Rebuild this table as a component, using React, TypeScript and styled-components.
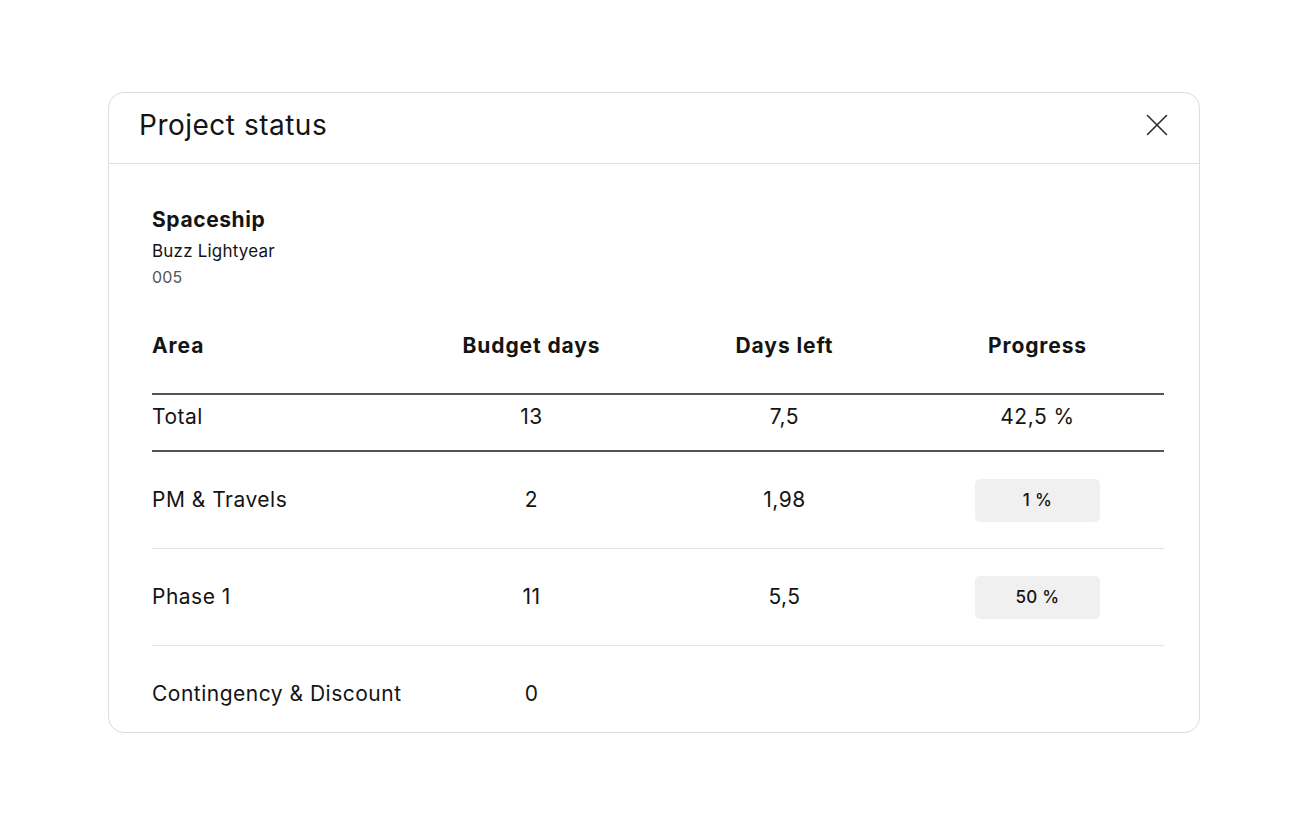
import React from "react";
import styled, { createGlobalStyle } from "styled-components";

const GlobalStyle = createGlobalStyle`
  html, body {
    margin: 0;
    padding: 0;
    background: #ffffff;
  }
  body {
    font-family: Inter, "Noto Sans", "Liberation Sans", sans-serif;
    color: #141414;
  }
  * { box-sizing: border-box; }
`;

const Page = styled.div`
  width: 1305px;
  height: 833px;
  padding: 92px 0 0 108px;
`;

const Card = styled.section`
  width: 1092px;
  height: 641px;
  border: 1px solid #dcdcdc;
  border-radius: 16px;
  overflow: hidden;
  background: #fff;
  display: flex;
  flex-direction: column;
`;

const Header = styled.header`
  height: 71px;
  flex: none;
  display: flex;
  align-items: center;
  justify-content: space-between;
  padding: 0 31px 6px 30px;
  border-bottom: 1px solid #dedede;
`;

const Title = styled.h1`
  margin: 0;
  font-size: 28px;
  font-weight: 400;
  line-height: 36px;
  color: #141414;
  letter-spacing: 0.5px;
`;

const CloseButton = styled.button`
  width: 22px;
  height: 22px;
  padding: 0;
  border: 0;
  background: transparent;
  display: flex;
  align-items: center;
  justify-content: center;
  cursor: pointer;
`;

const Body = styled.div`
  flex: 1;
  padding: 42px 35px 0 43px;
`;

const Info = styled.div`
  display: flex;
  flex-direction: column;
`;

const ProjectName = styled.div`
  font-size: 21px;
  font-weight: 700;
  line-height: 28px;
  letter-spacing: 0.6px;
  margin-bottom: 4px;
`;

const InfoLine = styled.div<{ $muted?: boolean }>`
  font-size: ${(p) => (p.$muted ? "16px" : "17px")};
  line-height: 26px;
  letter-spacing: 0.2px;
  color: ${(p) => (p.$muted ? "#555" : "#141414")};
`;

const Table = styled.div`
  margin-top: 42px;
  display: flex;
  flex-direction: column;
`;

type RowKind = "head" | "total" | "item";

const Row = styled.div<{ $kind: RowKind }>`
  display: grid;
  grid-template-columns: repeat(4, 1fr);
  align-items: center;
  ${(p) =>
    p.$kind === "head"
      ? "padding: 0 0 33px; border-bottom: 2px solid #555;"
      : p.$kind === "total"
      ? "padding: 8px 0 19px; border-bottom: 2px solid #555;"
      : "height: 97px; border-bottom: 1px solid #e4e4e4;"}
`;

const Cell = styled.div<{ $first?: boolean; $bold?: boolean }>`
  font-size: 21px;
  line-height: 28px;
  font-weight: ${(p) => (p.$bold ? 700 : 400)};
  letter-spacing: ${(p) => (p.$bold ? "0.9px" : "0.5px")};
  display: flex;
  justify-content: ${(p) => (p.$first ? "flex-start" : "center")};
  white-space: nowrap;
`;

const Pill = styled.span`
  width: 125px;
  height: 43px;
  border-radius: 5px;
  background: #f0f0f0;
  display: flex;
  align-items: center;
  justify-content: center;
  font-size: 17px;
  font-weight: 500;
  letter-spacing: 0.3px;
`;

const CloseIcon = () => (
  <svg width="22" height="22" viewBox="0 0 22 22" aria-hidden="true">
    <path d="M1.5 1.5 L20.5 20.5 M20.5 1.5 L1.5 20.5" stroke="#2b2b2b" strokeWidth="1.6" strokeLinecap="round" fill="none" />
  </svg>
);

type Item = { area: string; budget: string; left?: string; progress?: string };

const items: Item[] = [
  { area: "PM & Travels", budget: "2", left: "1,98", progress: "1 %" },
  { area: "Phase 1", budget: "11", left: "5,5", progress: "50 %" },
  { area: "Contingency & Discount", budget: "0" },
];

export default function App() {
  return (
    <>
      <GlobalStyle />
      <Page>
        <Card>
          <Header>
            <Title>Project status</Title>
            <CloseButton aria-label="Close">
              <CloseIcon />
            </CloseButton>
          </Header>
          <Body>
            <Info>
              <ProjectName>Spaceship</ProjectName>
              <InfoLine>Buzz Lightyear</InfoLine>
              <InfoLine $muted>005</InfoLine>
            </Info>
            <Table>
              <Row $kind="head">
                <Cell $first $bold>Area</Cell>
                <Cell $bold>Budget days</Cell>
                <Cell $bold>Days left</Cell>
                <Cell $bold>Progress</Cell>
              </Row>
              <Row $kind="total">
                <Cell $first>Total</Cell>
                <Cell>13</Cell>
                <Cell>7,5</Cell>
                <Cell>42,5 %</Cell>
              </Row>
              {items.map((it) => (
                <Row $kind="item" key={it.area}>
                  <Cell $first>{it.area}</Cell>
                  <Cell>{it.budget}</Cell>
                  <Cell>{it.left ?? ""}</Cell>
                  <Cell>{it.progress ? <Pill>{it.progress}</Pill> : null}</Cell>
                </Row>
              ))}
            </Table>
          </Body>
        </Card>
      </Page>
    </>
  );
}
